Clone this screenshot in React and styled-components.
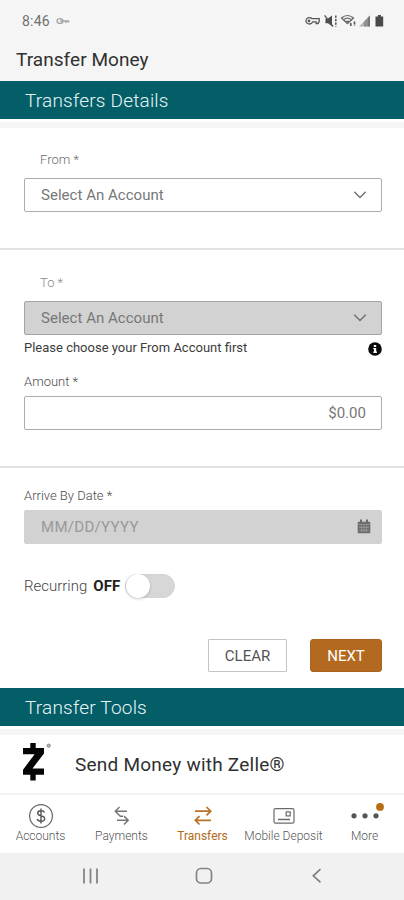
import React, { useState } from "react";
import styled, { createGlobalStyle } from "styled-components";

const tabs = [
  { name: "Accounts", icon: <AccountsIcon /> },
  { name: "Payments", icon: <PaymentsIcon /> },
  { name: "Transfers", icon: <TransfersIcon /> },
  { name: "Mobile Deposit", icon: <DepositIcon /> },
  { name: "More", icon: <MoreIcon /> },
];

function App() {
  const [recurring, setRecurring] = useState(false);
  const [tab, setTab] = useState("Transfers");

  return (
    <Screen>
      <GlobalStyle />
      <StatusBar>
        <Clock>8:46</Clock>
        <SmallKeyIcon />
        <StatusIcons />
      </StatusBar>
      <Title>Transfer Money</Title>
      <SectionBar>Transfers Details</SectionBar>
      <Strip />
      <Group $height={120} $top={22}>
        <Label $indent>From *</Label>
        <Field>
          <FieldText>Select An Account</FieldText>
          <Chevron />
        </Field>
      </Group>
      <Divider />
      <Group $height={216} $top={23}>
        <Label $indent $light>
          To *
        </Label>
        <Field $disabled>
          <FieldText>Select An Account</FieldText>
          <Chevron />
        </Field>
        <Hint>
          <span>Please choose your From Account first</span>
          <InfoIcon />
        </Hint>
        <Label>Amount *</Label>
        <Field $right>
          <FieldText>$0.00</FieldText>
        </Field>
      </Group>
      <Divider />
      <Group $height={220} $top={18}>
        <Label>Arrive By Date *</Label>
        <Field $disabled $plain>
          <FieldText $faded>MM/DD/YYYY</FieldText>
          <CalendarIcon />
        </Field>
        <Recurring>
          <span>Recurring</span>
          <b>{recurring ? "ON" : "OFF"}</b>
          <Toggle $on={recurring} onClick={() => setRecurring(!recurring)}>
            <Knob />
          </Toggle>
        </Recurring>
        <Buttons>
          <Button $width={79}>CLEAR</Button>
          <Button $width={72} $primary>
            NEXT
          </Button>
        </Buttons>
      </Group>
      <SectionBar>Transfer Tools</SectionBar>
      <Strip />
      <Tool>
        <ZelleLogo />
        <span>Send Money with Zelle®</span>
      </Tool>
      <Tabs>
        {tabs.map((t) => (
          <Tab
            key={t.name}
            $active={tab === t.name}
            onClick={() => setTab(t.name)}
          >
            {t.icon}
            <span>{t.name}</span>
          </Tab>
        ))}
      </Tabs>
      <SystemNav>
        <svg width="18" height="18" viewBox="0 0 18 18" stroke="#858585">
          <path d="M2 1.5v15M8.5 1.5v15M15 1.5v15" strokeWidth="1.8" />
        </svg>
        <svg width="18" height="18" viewBox="0 0 18 18" stroke="#858585">
          <rect
            x="1.5"
            y="1.5"
            width="15"
            height="14.5"
            rx="4.5"
            fill="none"
            strokeWidth="1.7"
          />
        </svg>
        <svg width="18" height="18" viewBox="0 0 18 18" stroke="#808080">
          <path d="M12.5 2.2L5.3 8.8l7.2 6.6" fill="none" strokeWidth="1.7" />
        </svg>
      </SystemNav>
    </Screen>
  );
}

export default App;

function SmallKeyIcon() {
  return (
    <svg width="14" height="8" viewBox="0 0 14 8" fill="none" stroke="#a5a5a5">
      <ellipse cx="4" cy="4" rx="3" ry="2.4" strokeWidth="1.4" />
      <path d="M4 4h9.3M10 4.5v1.6M12.3 4v1.6" strokeWidth="1.6" />
    </svg>
  );
}

function StatusIcons() {
  return (
    <StatusSvg width="80" height="16" viewBox="0 0 80 16" fill="none">
      <g stroke="#555" strokeWidth="1.3">
        <path d="M8 5.7h7.2v2.600l-1.100 2.200h-2V8.900H8.600c-.6 1.400-1.600 2.100-3 2.100C3.500 11 2 9.600 2 7.900s1.500-3.200 3.300-3.200c1.100 0 2 .3 2.700 1z" />
        <circle cx="5" cy="7.9" r=".7" />
      </g>
      <path d="M21.500 5.500H24l4-3v10.800l-4-3h-2.500z" fill="#4c4c4c" />
      <path d="M20.600 2.300l8.400 11.200" stroke="#555" strokeWidth="1.3" />
      <path
        d="M31.800 2.500v11"
        stroke="#555"
        strokeWidth="1.6"
        strokeDasharray="2.2 1.3"
      />
      <g stroke="#666" strokeWidth="1.3">
        <path d="M37.500 5c3.600-3.200 8.400-3.200 12 0l-6 5.500z" />
        <path d="M39.800 6.500c2.200-1.700 5.200-1.700 7.400 0M42 8.300h3" />
      </g>
      <path
        d="M46.800 10v4M50.500 8.500v4.400"
        stroke="#555"
        strokeWidth="1.6"
        strokeDasharray="3 1"
      />
      <path d="M55 13.500L66 2.500v11z" fill="#b5b5b5" />
      <path d="M60 13.500v-5L63.500 5v8.500z" fill="#909090" />
      <path d="M63.600 13.500V4.800L66 2.500v11z" fill="#777" />
      <path d="M71.500 3.500H74V2h2.900v1.500h2.300v10h-7.700z" fill="#4a4a4a" />
    </StatusSvg>
  );
}

function Chevron() {
  return (
    <svg width="14" height="9" viewBox="0 0 14 9" fill="none" stroke="#707070">
      <path d="M1.300 1.700L7 7.400l5.700-5.700" strokeWidth="1.4" />
    </svg>
  );
}

function InfoIcon() {
  return (
    <svg width="14" height="14" viewBox="0 0 14 14">
      <circle cx="7" cy="7" r="6.8" fill="#0a0a0a" />
      <path
        d="M5.800 3h2.400v2H5.800zM5.300 5.900h2.900v3.600h.7v1.400H5.300V9.500H6V7.200h-.7z"
        fill="#fff"
      />
    </svg>
  );
}

function CalendarIcon() {
  return (
    <svg width="14" height="15" viewBox="0 0 14 15">
      <path
        d="M3 .5h2v2.300h4V.5h2v2.300h1.300c.6 0 1 .4 1 1v9.500c0 .6-.4 1-1 1H1.700c-.6 0-1-.4-1-1V3.800c0-.6.4-1 1-1H3z"
        fill="#6c6c6c"
      />
      <path
        d="M.7 5.400h12.600M2 8.300h10M2 11.300h10M4.700 6.500V13M7.200 6.500V13M9.700 6.500V13"
        stroke="#adadad"
        strokeWidth=".6"
      />
    </svg>
  );
}

function ZelleLogo() {
  return (
    <svg width="30" height="40" viewBox="0 0 30 40">
      <path
        d="M8.300 1h5.400v5H22v5.400L10.500 26.500H22v6.300h-8.300v5.700H8.300v-5.700H1v-5.100l11.600-15.400H1V6h7.300z"
        fill="#050505"
      />
      <circle cx="26.700" cy="3.700" r="1.600" fill="#bbb" stroke="#888" />
    </svg>
  );
}

function AccountsIcon() {
  return (
    <svg width="26" height="26" viewBox="0 0 26 26" fill="none">
      <circle cx="13" cy="13" r="11.400" stroke="#666" strokeWidth="1.200" />
      <path
        d="M16.500 9.600c-.5-1.300-1.700-1.900-3.500-1.900-2 0-3.300.9-3.300 2.500 0 3.600 7 1.700 7 5.400 0 1.700-1.400 2.700-3.700 2.700-2 0-3.300-.8-3.800-2.300M13 5.500v15"
        stroke="#555"
        strokeWidth="1.400"
      />
    </svg>
  );
}

function PaymentsIcon() {
  return (
    <svg width="26" height="26" viewBox="0 0 26 26" fill="none">
      <path
        d="M18 8.200H6.500M10.500 4L6.300 8.200l5 5H14M8 17.300h11M15 13.100l4.200 4.200-4.200 4.200"
        stroke="#777"
        strokeWidth="1.500"
      />
    </svg>
  );
}

function TransfersIcon() {
  return (
    <svg width="26" height="26" viewBox="0 0 26 26" fill="none">
      <path
        d="M5 8.200h15M16.500 4l4.200 4.200-4.200 4.200M21 17.300H6M9.500 13.100l-4.200 4.200 4.200 4.200"
        stroke="#b87324"
        strokeWidth="1.700"
      />
    </svg>
  );
}

function DepositIcon() {
  return (
    <svg width="26" height="26" viewBox="0 0 26 26" fill="none">
      <g stroke="#6b6b6b" strokeWidth="1.200">
        <rect x="3" y="5.600" width="20" height="14.600" rx="1.500" />
        <rect x="15.200" y="8.900" width="4" height="4" />
        <path d="M7 16.500h12" strokeWidth="1.500" />
      </g>
    </svg>
  );
}

function MoreIcon() {
  return (
    <svg width="40" height="26" viewBox="0 0 40 26" fill="#555">
      <circle cx="9" cy="12.800" r="2.600" />
      <circle cx="20" cy="12.800" r="2.600" />
      <circle cx="31" cy="12.800" r="2.600" />
      <circle cx="35" cy="3.900" r="3.900" fill="#b96c16" />
    </svg>
  );
}

const GlobalStyle = createGlobalStyle`
  * {
    box-sizing: border-box;
  }
  body {
    margin: 0;
    background: #fff;
  }
`;

const Screen = styled.div`
  display: flex;
  flex-direction: column;
  width: 404px;
  height: 900px;
  overflow: hidden;
  background: #fff;
  color: #555;
  font-family: Roboto, "Liberation Sans", sans-serif;
  svg {
    flex: none;
    display: block;
  }
`;

const StatusBar = styled.div`
  display: flex;
  align-items: center;
  height: 41px;
  padding: 1px 20px 0 22px;
  background: #f5f5f5;
`;

const Clock = styled.span`
  width: 34px;
  font-size: 14px;
  letter-spacing: 0.2px;
  color: #707070;
`;

const StatusSvg = styled.svg`
  margin-left: auto;
`;

const Title = styled.div`
  height: 40px;
  padding-left: 16px;
  background: #f5f5f5;
  color: #303030;
  font-size: 19px;
  letter-spacing: 0.05px;
  line-height: 37px;
`;

const SectionBar = styled.div`
  flex: none;
  height: 38px;
  padding-left: 25px;
  background: #035e68;
  color: #e8f5f6;
  font-size: 19px;
  font-weight: 300;
  letter-spacing: 0.2px;
  line-height: 39px;
`;

const Strip = styled.div`
  flex: none;
  height: 9px;
  border-top: 3px solid #fff;
  background: #f5f5f5;
`;

const Group = styled.div`
  flex: none;
  display: flex;
  flex-direction: column;
  height: ${(props) => props.$height}px;
  padding: ${(props) => props.$top}px 22px 0 24px;
`;

const Divider = styled.div`
  flex: none;
  height: 2px;
  background: #e4e4e4;
`;

const Label = styled.div`
  height: ${(props) => (props.$indent ? 28 : 24)}px;
  padding-left: ${(props) => (props.$indent ? 16 : 0)}px;
  color: ${(props) =>
    props.$light ? "#8a8a8a" : props.$indent ? "#6c6c6c" : "#4c4c4c"};
  font-size: 13px;
  font-weight: 300;
  line-height: 20px;
`;

const Field = styled.div`
  display: flex;
  align-items: center;
  justify-content: ${(props) => (props.$right ? "flex-end" : "space-between")};
  height: 34px;
  padding: 0 ${(props) => (props.$plain ? 10 : props.$right ? 15 : 14)}px 1px
    16px;
  border: 1px solid
    ${(props) =>
      props.$plain ? "#d2d2d2" : props.$disabled ? "#a5a5a5" : "#adadad"};
  border-radius: 2px;
  background: ${(props) => (props.$disabled ? "#d2d2d2" : "#fff")};
`;

const FieldText = styled.span`
  color: ${(props) => (props.$faded ? "#999" : "#777")};
  font-size: 15px;
  letter-spacing: ${(props) => (props.$faded ? 0.3 : 0.03)}px;
`;

const Hint = styled.div`
  display: flex;
  justify-content: space-between;
  height: 37px;
  padding-top: 7px;
  color: #3c3c3c;
  font-size: 13px;
  line-height: 12px;
`;

const Recurring = styled.div`
  display: flex;
  align-items: center;
  height: 36px;
  margin-top: 24px;
  color: #444;
  font-size: 15px;
  font-weight: 300;
  b {
    width: 32px;
    margin-left: 6px;
    color: #222;
    font-weight: 700;
  }
`;

const Toggle = styled.button`
  width: 50px;
  height: 24px;
  margin-bottom: 1px;
  padding: 0;
  border: 1px solid #d4d4d4;
  border-radius: 12px;
  background: #d7d7d7;
  display: flex;
  align-items: center;
  justify-content: ${(props) => (props.$on ? "flex-end" : "flex-start")};
`;

const Knob = styled.span`
  width: 24px;
  height: 24px;
  border-radius: 50%;
  background: #fff;
  box-shadow: 0 1px 3px rgba(0, 0, 0, 0.2);
`;

const Buttons = styled.div`
  display: flex;
  justify-content: flex-end;
  gap: 23px;
  margin-top: 35px;
`;

const Button = styled.button`
  width: ${(props) => props.$width}px;
  height: 33px;
  padding: 0;
  border: 1px solid ${(props) => (props.$primary ? "#a9641d" : "#c4c4c4")};
  border-radius: ${(props) => (props.$primary ? 3 : 1)}px;
  background: ${(props) => (props.$primary ? "#b36a20" : "#fff")};
  color: ${(props) => (props.$primary ? "#fff" : "#555")};
  font-family: inherit;
  font-size: 15px;
`;

const Tool = styled.div`
  flex: none;
  display: flex;
  align-items: center;
  height: 60px;
  padding: 0 22px;
  border-bottom: 2px solid #f2f2f2;
  color: #303030;
  font-size: 19px;
  letter-spacing: 0.23px;
  svg {
    margin-bottom: 4px;
  }
  span {
    margin-left: 23px;
  }
`;

const Tabs = styled.div`
  flex: none;
  display: grid;
  grid-template-columns: repeat(5, 81px);
  height: 58px;
`;

const Tab = styled.div`
  display: flex;
  flex-direction: column;
  align-items: center;
  padding-top: 8px;
  color: ${(props) => (props.$active ? "#b26a18" : "#555")};
  font-size: 12px;
  font-weight: ${(props) => (props.$active ? 400 : 300)};
  line-height: 14px;
  white-space: nowrap;
`;

const SystemNav = styled.div`
  flex: 1;
  display: flex;
  align-items: center;
  justify-content: space-between;
  padding: 0 78px 1px 82px;
  background: #f1f1f1;
`;
